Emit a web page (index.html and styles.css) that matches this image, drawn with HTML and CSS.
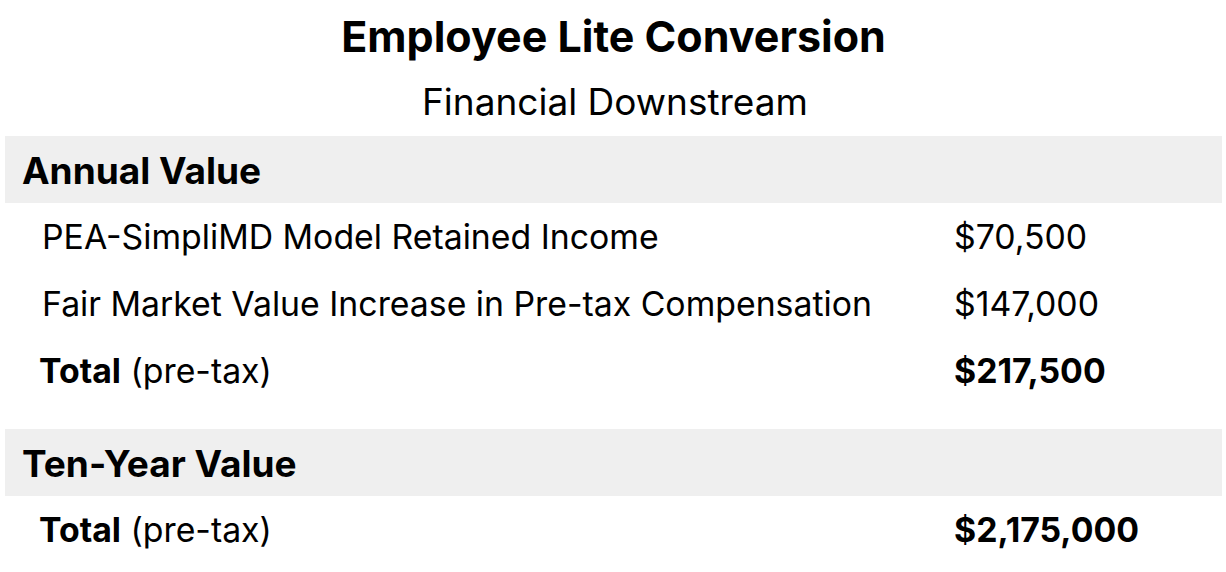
FILE: index.html
```html
<!DOCTYPE html>
<html>
<head>
<meta charset="utf-8">
<link rel="stylesheet" href="styles.css">
</head>
<body>
<div class="page">
  <h1 class="title">Employee Lite Conversion</h1>
  <div class="subtitle">Financial Downstream</div>
  <section class="section">
    <div class="band">Annual Value</div>
    <div class="row"><span class="label">PEA-SimpliMD Model Retained Income</span><span class="value">$70,500</span></div>
    <div class="row"><span class="label">Fair Market Value Increase in Pre-tax Compensation</span><span class="value">$147,000</span></div>
    <div class="row total"><span class="label"><b>Total</b> (pre-tax)</span><span class="value"><b>$217,500</b></span></div>
  </section>
  <section class="section second">
    <div class="band">Ten-Year Value</div>
    <div class="row total"><span class="label"><b>Total</b> (pre-tax)</span><span class="value"><b>$2,175,000</b></span></div>
  </section>
</div>
</body>
</html>
```
FILE: styles.css
```css
html, body {
  margin: 0;
  padding: 0;
  background: #fff;
}
body {
  font-family: Inter, "Noto Sans", sans-serif;
  color: #000;
}
.page {
  padding: 0 4px 0 5px;
}
.title {
  margin: 0;
  padding-top: 12px;
  height: 52px;
  line-height: 48px;
  font-size: 43px;
  font-weight: 700;
  text-align: center;
}
.subtitle {
  height: 72px;
  line-height: 76px;
  font-size: 37px;
  text-align: center;
  margin-left: 3px;
}
.band {
  background: #efefef;
  height: 67px;
  line-height: 69px;
  padding-left: 17px;
  font-size: 37px;
  font-weight: 700;
}
.row {
  display: grid;
  grid-template-columns: 912px 1fr;
  height: 67px;
  line-height: 68px;
  font-size: 33.8px;
  padding-left: 37px;
}
.row.total {
  padding-left: 34px;
}
.row.total .value {
  margin-left: 3px;
}
.row b {
  font-weight: 700;
}
.second {
  margin-top: 25px;
}
```
